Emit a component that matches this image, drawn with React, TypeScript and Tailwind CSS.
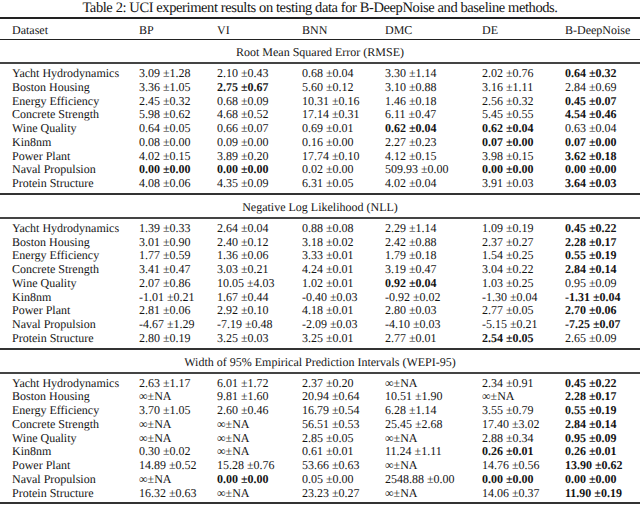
const cols = ["Dataset", "BP", "VI", "BNN", "DMC", "DE", "B-DeepNoise"]

const names = [
  "Yacht Hydrodynamics",
  "Boston Housing",
  "Energy Efficiency",
  "Concrete Strength",
  "Wine Quality",
  "Kin8nm",
  "Power Plant",
  "Naval Propulsion",
  "Protein Structure",
]

// a leading * marks a bold (best) entry
const sections: { title: string; rows: string[][] }[] = [
  {
    title: "Root Mean Squared Error (RMSE)",
    rows: [
      ["3.09 ±1.28", "2.10 ±0.43", "0.68 ±0.04", "3.30 ±1.14", "2.02 ±0.76", "*0.64 ±0.32"],
      ["3.36 ±1.05", "*2.75 ±0.67", "5.60 ±0.12", "3.10 ±0.88", "3.16 ±1.11", "2.84 ±0.69"],
      ["2.45 ±0.32", "0.68 ±0.09", "10.31 ±0.16", "1.46 ±0.18", "2.56 ±0.32", "*0.45 ±0.07"],
      ["5.98 ±0.62", "4.68 ±0.52", "17.14 ±0.31", "6.11 ±0.47", "5.45 ±0.55", "*4.54 ±0.46"],
      ["0.64 ±0.05", "0.66 ±0.07", "0.69 ±0.01", "*0.62 ±0.04", "*0.62 ±0.04", "0.63 ±0.04"],
      ["0.08 ±0.00", "0.09 ±0.00", "0.16 ±0.00", "2.27 ±0.23", "*0.07 ±0.00", "*0.07 ±0.00"],
      ["4.02 ±0.15", "3.89 ±0.20", "17.74 ±0.10", "4.12 ±0.15", "3.98 ±0.15", "*3.62 ±0.18"],
      ["*0.00 ±0.00", "*0.00 ±0.00", "0.02 ±0.00", "509.93 ±0.00", "*0.00 ±0.00", "*0.00 ±0.00"],
      ["4.08 ±0.06", "4.35 ±0.09", "6.31 ±0.05", "4.02 ±0.04", "3.91 ±0.03", "*3.64 ±0.03"],
    ],
  },
  {
    title: "Negative Log Likelihood (NLL)",
    rows: [
      ["1.39 ±0.33", "2.64 ±0.04", "0.88 ±0.08", "2.29 ±1.14", "1.09 ±0.19", "*0.45 ±0.22"],
      ["3.01 ±0.90", "2.40 ±0.12", "3.18 ±0.02", "2.42 ±0.88", "2.37 ±0.27", "*2.28 ±0.17"],
      ["1.77 ±0.59", "1.36 ±0.06", "3.33 ±0.01", "1.79 ±0.18", "1.54 ±0.25", "*0.55 ±0.19"],
      ["3.41 ±0.47", "3.03 ±0.21", "4.24 ±0.01", "3.19 ±0.47", "3.04 ±0.22", "*2.84 ±0.14"],
      ["2.07 ±0.86", "10.05 ±4.03", "1.02 ±0.01", "*0.92 ±0.04", "1.03 ±0.25", "0.95 ±0.09"],
      ["-1.01 ±0.21", "1.67 ±0.44", "-0.40 ±0.03", "-0.92 ±0.02", "-1.30 ±0.04", "*-1.31 ±0.04"],
      ["2.81 ±0.06", "2.92 ±0.10", "4.18 ±0.01", "2.80 ±0.03", "2.77 ±0.05", "*2.70 ±0.06"],
      ["-4.67 ±1.29", "-7.19 ±0.48", "-2.09 ±0.03", "-4.10 ±0.03", "-5.15 ±0.21", "*-7.25 ±0.07"],
      ["2.80 ±0.19", "3.25 ±0.03", "3.25 ±0.01", "2.77 ±0.01", "*2.54 ±0.05", "2.65 ±0.09"],
    ],
  },
  {
    title: "Width of 95% Empirical Prediction Intervals (WEPI-95)",
    rows: [
      ["2.63 ±1.17", "6.01 ±1.72", "2.37 ±0.20", "∞±NA", "2.34 ±0.91", "*0.45 ±0.22"],
      ["∞±NA", "9.81 ±1.60", "20.94 ±0.64", "10.51 ±1.90", "∞±NA", "*2.28 ±0.17"],
      ["3.70 ±1.05", "2.60 ±0.46", "16.79 ±0.54", "6.28 ±1.14", "3.55 ±0.79", "*0.55 ±0.19"],
      ["∞±NA", "∞±NA", "56.51 ±0.53", "25.45 ±2.68", "17.40 ±3.02", "*2.84 ±0.14"],
      ["∞±NA", "∞±NA", "2.85 ±0.05", "∞±NA", "2.88 ±0.34", "*0.95 ±0.09"],
      ["0.30 ±0.02", "∞±NA", "0.61 ±0.01", "11.24 ±1.11", "*0.26 ±0.01", "*0.26 ±0.01"],
      ["14.89 ±0.52", "15.28 ±0.76", "53.66 ±0.63", "∞±NA", "14.76 ±0.56", "*13.90 ±0.62"],
      ["∞±NA", "*0.00 ±0.00", "0.05 ±0.00", "2548.88 ±0.00", "*0.00 ±0.00", "*0.00 ±0.00"],
      ["16.32 ±0.63", "∞±NA", "23.23 ±0.27", "∞±NA", "14.06 ±0.37", "*11.90 ±0.19"],
    ],
  },
]

const grid = "grid grid-cols-[139px_78px_85px_83px_97px_83px_75px]"

function Cell({ v }: { v: string }) {
  const bold = v.startsWith("*")
  return <div className={bold ? "font-bold" : ""}>{bold ? v.slice(1) : v}</div>
}

export default function App() {
  return (
    <div className="w-[640px] h-[507px] bg-white text-[#151515] font-['Liberation_Serif',serif] [text-rendering:geometricPrecision] overflow-hidden">
      <p className="h-[17px] text-center text-[14.5px] tracking-[-0.4px] leading-[16px]">
        Table 2: UCI experiment results on testing data for B-DeepNoise and baseline methods.
      </p>
      <div className={`${grid} h-[23px] items-center border-t-2 border-b border-[#222] text-[12px] pt-[1px]`}>
        {cols.map((c, i) => (
          <div key={c} className={i === 0 ? "pl-[12px]" : ""}>
            {c}
          </div>
        ))}
      </div>
      {sections.map((s) => (
        <div key={s.title} className="border-b-2 border-[#333]">
          <div className="h-[24px] flex items-center justify-center border-b-2 border-[#444] text-[12px] pt-[2px]">
            {s.title}
          </div>
          <div className="pt-[3px] pb-[2px] text-[12px] leading-[13.75px]">
            {s.rows.map((r, i) => (
              <div key={names[i]} className={grid}>
                <div className="pl-[12px]">{names[i]}</div>
                {r.map((v, j) => (
                  <Cell key={j} v={v} />
                ))}
              </div>
            ))}
          </div>
        </div>
      ))}
    </div>
  )
}
